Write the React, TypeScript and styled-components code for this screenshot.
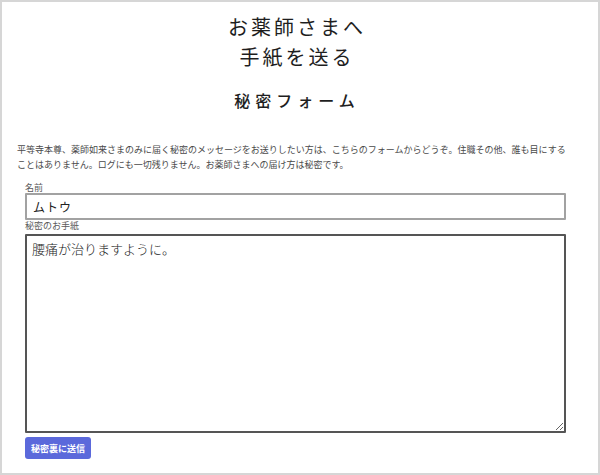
import React from 'react';
import styled, { createGlobalStyle } from 'styled-components';

const GlobalStyle = createGlobalStyle`
    html, body {
        margin: 0;
        padding: 0;
        background: #ffffff;
    }
    body {
        font-family: 'Noto Sans CJK JP', 'Noto Sans', sans-serif;
    }
`;

const jp = "'Noto Sans CJK JP', 'Noto Sans', sans-serif";

export default function App() {
    return (
        <>
            <GlobalStyle />
            <Frame>
                <Header>
                    <Title>
                        お薬師さまへ
                        <br />
                        手紙を送る
                    </Title>
                    <Subtitle>秘密フォーム</Subtitle>
                </Header>
                <Intro>
                    平等寺本尊、薬師如来さまのみに届く秘密のメッセージをお送りしたい方は、こちらのフォームからどうぞ。住職その他、誰も目にすることはありません。ログにも一切残りません。お薬師さまへの届け方は秘密です。
                </Intro>
                <Form onSubmit={(e) => e.preventDefault()}>
                    <Label htmlFor="name">名前</Label>
                    <NameInput id="name" type="text" defaultValue="ムトウ" />
                    <Label htmlFor="letter" $gap={3}>
                        秘密のお手紙
                    </Label>
                    <Letter id="letter" defaultValue="腰痛が治りますように。" />
                    <SubmitButton type="submit">秘密裏に送信</SubmitButton>
                </Form>
            </Frame>
        </>
    );
}

const Frame = styled.div`
    box-sizing: border-box;
    width: 600px;
    height: 475px;
    border: 2px solid #d6d6d6;
    padding: 10px 15px 0;
    display: flex;
    flex-direction: column;
`;

const Header = styled.header`
    display: flex;
    flex-direction: column;
    align-items: center;
    padding-right: 6px;
`;

const Title = styled.h1`
    margin: 0;
    font-family: ${jp};
    font-size: 20px;
    font-weight: 400;
    line-height: 30px;
    letter-spacing: 3px;
    color: #1e1e1e;
    text-align: center;
`;

const Subtitle = styled.h2`
    margin: 16px 0 0;
    font-family: ${jp};
    font-size: 16px;
    font-weight: 500;
    line-height: 24px;
    letter-spacing: 5px;
    color: #1e1e1e;
`;

const Intro = styled.p`
    margin: 30px 0 0;
    width: 555px;
    font-family: ${jp};
    font-size: 9px;
    font-weight: 400;
    line-height: 15px;
    color: #4a4a4a;
`;

const Form = styled.form`
    display: flex;
    flex-direction: column;
    align-items: flex-start;
    width: 541px;
    margin: 10px 0 0 8px;
`;

const Label = styled.label<{ $gap?: number }>`
    display: block;
    font-family: ${jp};
    font-size: 9px;
    font-weight: 400;
    line-height: 11px;
    color: #5a5a5a;
    margin-bottom: ${({ $gap }) => $gap ?? 0}px;
`;

const NameInput = styled.input`
    box-sizing: border-box;
    width: 100%;
    height: 27px;
    margin: 0;
    padding: 0 6px;
    border: 2px solid #a2a2a2;
    border-radius: 1px;
    font-family: ${jp};
    font-size: 12px;
    font-weight: 400;
    letter-spacing: 1px;
    color: #222;
    outline: none;
`;

const Letter = styled.textarea`
    box-sizing: border-box;
    width: 100%;
    height: 199px;
    margin: 0;
    padding: 4px 5px;
    border: 2px solid #555;
    border-radius: 1px;
    font-family: ${jp};
    font-size: 13px;
    font-weight: 300;
    line-height: 18px;
    color: #222;
    outline: none;
`;

const SubmitButton = styled.button`
    margin-top: 4px;
    height: 22px;
    padding: 0 6px;
    border: none;
    border-radius: 3px;
    background: #5b69db;
    color: #fff;
    font-family: ${jp};
    font-size: 9px;
    font-weight: 700;
    cursor: pointer;
`;
